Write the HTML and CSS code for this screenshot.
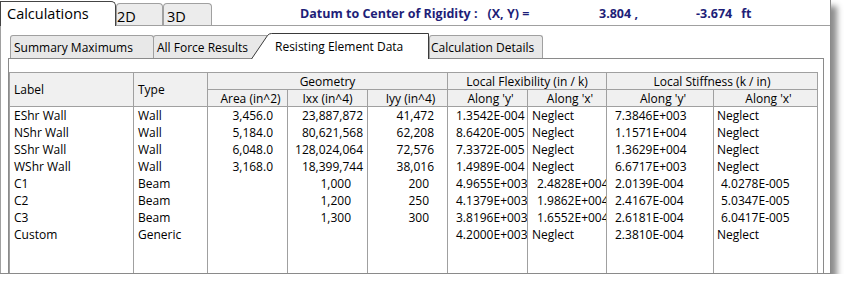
FILE: index.html
```html
<!DOCTYPE html>
<html>
<head>
<meta charset="utf-8">
<title>Calculations</title>
<link rel="stylesheet" href="styles.css">
</head>
<body>
<div class="window">
  <div class="topbar">
    <div class="ttab ttab-active">Calculations</div>
    <div class="ttab ttab-2d">2D</div>
    <div class="ttab ttab-3d">3D</div>
    <div class="datum">
      <span class="dlabel">Datum to Center of Rigidity :<span class="dxy">(X, Y) =</span></span>
      <span class="dx">3.804 ,</span>
      <span class="dy">-3.674<span class="dunit">ft</span></span>
    </div>
  </div>
  <div class="panel">
    <div class="subtabs">
      <div class="stab stab-1">Summary Maximums</div>
      <div class="stab stab-2">All Force Results</div>
      <div class="stab-active">
        <svg class="stab-shape" width="178" height="26" viewBox="0 0 178 26"><path d="M0.5 26 L16.5 2.5 Q18 0.5 20.5 0.5 L177.5 0.5 L177.5 26" fill="#fff" stroke="#3a3a3a" stroke-width="1"/></svg>
        <span class="stab-label">Resisting Element Data</span>
      </div>
      <div class="stab stab-4">Calculation Details</div>
    </div>
    <div class="pane">
      <div class="grid">
        <div class="h hl rs2">Label</div>
        <div class="h hl rs2">Type</div>
        <div class="h cs3">Geometry</div>
        <div class="h cs2">Local Flexibility (in / k)</div>
        <div class="h cs2">Local Stiffness (k / in)</div>
        <div class="h harea">Area (in^2)</div>
        <div class="h">Ixx (in^4)</div>
        <div class="h hiyy">Iyy (in^4)</div>
        <div class="h hsh">Along 'y'</div>
        <div class="h hsh">Along 'x'</div>
        <div class="h hsh">Along 'y'</div>
        <div class="h hsh">Along 'x'</div>

        <div class="d lbl">EShr Wall</div><div class="d typ">Wall</div><div class="d area">3,456.0</div><div class="d ixx">23,887,872</div><div class="d iyy">41,472</div><div class="d fy">1.3542E-004</div><div class="d fx">Neglect</div><div class="d sy">7.3846E+003</div><div class="d sx">Neglect</div>
        <div class="d lbl">NShr Wall</div><div class="d typ">Wall</div><div class="d area">5,184.0</div><div class="d ixx">80,621,568</div><div class="d iyy">62,208</div><div class="d fy">8.6420E-005</div><div class="d fx">Neglect</div><div class="d sy">1.1571E+004</div><div class="d sx">Neglect</div>
        <div class="d lbl">SShr Wall</div><div class="d typ">Wall</div><div class="d area">6,048.0</div><div class="d ixx">128,024,064</div><div class="d iyy">72,576</div><div class="d fy">7.3372E-005</div><div class="d fx">Neglect</div><div class="d sy">1.3629E+004</div><div class="d sx">Neglect</div>
        <div class="d lbl">WShr Wall</div><div class="d typ">Wall</div><div class="d area">3,168.0</div><div class="d ixx">18,399,744</div><div class="d iyy">38,016</div><div class="d fy">1.4989E-004</div><div class="d fx">Neglect</div><div class="d sy">6.6717E+003</div><div class="d sx">Neglect</div>
        <div class="d lbl">C1</div><div class="d typ">Beam</div><div class="d area"></div><div class="d ixx bm">1,000</div><div class="d iyy bm">200</div><div class="d fy">4.9655E+003</div><div class="d fx num">2.4828E+004</div><div class="d sy">2.0139E-004</div><div class="d sx num">4.0278E-005</div>
        <div class="d lbl">C2</div><div class="d typ">Beam</div><div class="d area"></div><div class="d ixx bm">1,200</div><div class="d iyy bm">250</div><div class="d fy">4.1379E+003</div><div class="d fx num">1.9862E+004</div><div class="d sy">2.4167E-004</div><div class="d sx num">5.0347E-005</div>
        <div class="d lbl">C3</div><div class="d typ">Beam</div><div class="d area"></div><div class="d ixx bm">1,300</div><div class="d iyy bm">300</div><div class="d fy">3.8196E+003</div><div class="d fx num">1.6552E+004</div><div class="d sy">2.6181E-004</div><div class="d sx num">6.0417E-005</div>
        <div class="d lbl">Custom</div><div class="d typ">Generic</div><div class="d area"></div><div class="d ixx"></div><div class="d iyy"></div><div class="d fy">4.2000E+003</div><div class="d fx">Neglect</div><div class="d sy">2.3810E-004</div><div class="d sx">Neglect</div>

        <div class="fill"></div><div class="fill"></div><div class="fill"></div><div class="fill"></div><div class="fill"></div><div class="fill"></div><div class="fill"></div><div class="fill"></div><div class="fill"></div>
      </div>
    </div>
  </div>
</div>
</body>
</html>
```

FILE: styles.css
```css
* { box-sizing: border-box; }

body {
  margin: 0;
  background: #fff;
  font-family: "Open Sans", "Noto Sans", sans-serif;
  color: #000;
}

.window {
  width: 831px;
  height: 274px;
  background: #fff;
  border-right: 1px solid #8a8a8a;
  border-bottom: 1px solid #8a8a8a;
  box-shadow: 6px 6px 6px rgba(0, 0, 0, 0.45);
  overflow: hidden;
}

/* top level tabs */
.topbar {
  display: flex;
  align-items: flex-end;
  height: 26px;
  border-bottom: 1px solid #a0a0a0;
}

.ttab {
  white-space: nowrap;
  font-size: 14.5px;
}

.ttab-active {
  width: 116px;
  height: 25px;
  margin-bottom: -1px;
  padding-left: 6px;
  line-height: 24px;
  background: #fff;
  border: 1px solid #444;
  border-bottom: none;
  border-radius: 0 5px 0 0;
}

.ttab-2d,
.ttab-3d {
  height: 22px;
  padding-top: 3px;
  line-height: 20px;
  background: #ececec;
  border: 1px solid #a0a0a0;
  border-bottom: none;
  border-radius: 4px 4px 0 0;
}

.ttab-2d {
  width: 47px;
  padding-left: 0;
}

.ttab-3d {
  width: 49px;
  padding-left: 3px;
}

.datum {
  align-self: stretch;
  display: flex;
  padding-top: 6px;
  padding-left: 88px;
  line-height: 16px;
  font-size: 12.5px;
  font-weight: bold;
  color: #1e1e78;
  white-space: nowrap;
}

.dlabel { width: 299px; }
.dxy { margin-left: 10px; }
.dx { width: 97px; }
.dunit { margin-left: 9px; }

/* panel below top tabs */
.panel {
  border-left: 1px solid #a0a0a0;
  padding-top: 7px;
}

.subtabs {
  display: flex;
  align-items: flex-end;
  height: 25px;
  margin-left: 9px;
  font-size: 12px;
}

.stab {
  height: 23px;
  padding-top: 4px;
  line-height: 16px;
  white-space: nowrap;
  background: #e8e8e8;
  border: 1px solid #a0a0a0;
  border-bottom: none;
  border-radius: 3px 3px 0 0;
}

.stab-1 { width: 144px; padding-left: 3px; }
.stab-2 { width: 118px; margin-left: -1px; padding-left: 3px; }
.stab-4 { width: 114px; padding-left: 1px; }

.stab-active {
  position: relative;
  width: 178px;
  height: 26px;
  margin-left: -20px;
  margin-bottom: -1px;
  padding-left: 24px;
  padding-top: 6px;
  line-height: 16px;
  white-space: nowrap;
}

.stab-shape {
  position: absolute;
  left: 0;
  top: 0;
  display: block;
}

.stab-label {
  position: relative;
}

.pane {
  width: 816px;
  height: 260px;
  margin-left: 7px;
  padding-top: 13px;
  border: 1px solid #8a8a8a;
}

/* data grid */
.grid {
  display: grid;
  grid-template-columns: 124px 74px 80px 80px 80px 80px 79px 107px 104px;
  grid-template-rows: repeat(10, 17px) 60px;
  width: max-content;
  border-left: 1px solid #a0a0a0;
  border-top: 1px solid #a0a0a0;
  font-size: 12px;
}

.grid > div {
  border-right: 1px solid #a0a0a0;
  white-space: nowrap;
  overflow: hidden;
}

.h {
  background: #f0f0f0;
  border-bottom: 1px solid #a0a0a0;
  padding-top: 1px;
  line-height: 16px;
  text-align: center;
}

.hl {
  text-align: left;
  padding-left: 4px;
  padding-top: 9px;
}

.rs2 { grid-row: span 2; }
.cs2 { grid-column: span 2; }
.cs3 { grid-column: span 3; }

.harea { padding-left: 6px; }
.hiyy { padding-left: 6px; }
.hsh { padding-left: 6px; }

.d {
  padding-top: 1px;
  line-height: 16px;
}

.lbl, .typ { padding-left: 4px; }
.area { text-align: right; padding-right: 14px; }
.ixx { text-align: right; padding-right: 4px; }
.iyy { text-align: right; padding-right: 13px; }
.ixx.bm { padding-right: 16px; }
.iyy.bm { padding-right: 18px; }
.fy { padding-left: 8px; text-overflow: clip; }
.fx { padding-left: 4px; text-overflow: clip; }
.fx.num { padding-left: 9px; }
.sy { padding-left: 8px; }
.sx { padding-left: 3px; }
.sx.num { padding-left: 7px; }
```
